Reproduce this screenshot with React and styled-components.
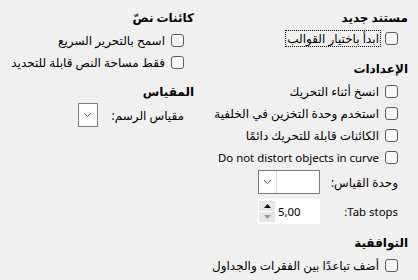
import React from 'react';
import styled, { createGlobalStyle } from 'styled-components';

const GlobalStyle = createGlobalStyle`
  html, body {
    margin: 0;
    padding: 0;
    background: #f0f0f0;
  }
  body {
    font-family: "Noto Sans", "DejaVu Sans", sans-serif;
    font-size: 12px;
    color: #000;
  }
`;

const Page = styled.div`
  direction: rtl;
  width: 418px;
  height: 280px;
  box-sizing: border-box;
  padding: 9px 10px 0 0;
  display: flex;
  gap: 20px;
  overflow: hidden;
`;

const Column = styled.div`
  width: ${(p) => p.width}px;
  flex-shrink: 0;
  display: flex;
  flex-direction: column;
`;

const Section = styled.section`
  display: flex;
  flex-direction: column;
  margin-top: ${(p) => p.gap || 0}px;
`;

const Heading = styled.h3`
  margin: 0;
  height: 18px;
  line-height: 18px;
  font-size: 12px;
  font-weight: 700;
`;

const Rows = styled.div`
  display: flex;
  flex-direction: column;
  padding-right: 10px;
  margin-top: ${(p) => p.top || 0}px;
`;

const CheckRow = styled.label`
  display: flex;
  align-items: center;
  gap: 4px;
  height: 22px;
  white-space: nowrap;
`;

const Box = styled.span`
  width: 13px;
  height: 13px;
  box-sizing: border-box;
  border: 1px solid #5c5c5c;
  border-radius: 3px;
  background: #f8f8f8;
  flex-shrink: 0;
`;

const Caption = styled.span`
  padding: 0 1px;
  line-height: 15px;
  font-size: ${(p) => (p.latin ? '11.4px' : 'inherit')};
  border: 1px dotted ${(p) => (p.focused ? '#000' : 'transparent')};
`;

const FieldRow = styled.div`
  display: flex;
  align-items: center;
  height: ${(p) => p.h || 28}px;
`;

const FieldLabel = styled.span`
  width: ${(p) => p.w}px;
  flex-shrink: 0;
  white-space: nowrap;
  font-size: ${(p) => (p.latin ? '11.4px' : 'inherit')};
`;

const Combo = styled.div`
  direction: ltr;
  width: ${(p) => p.w}px;
  height: 24px;
  box-sizing: border-box;
  background: #fff;
  border: 1px solid #7a7a7a;
  display: flex;
  align-items: stretch;
`;

const DropButton = styled.span`
  width: 17px;
  border-right: 1px solid ${(p) => (p.bare ? 'transparent' : '#d6d6d6')};
  display: flex;
  align-items: center;
  justify-content: center;
`;

const Spin = styled.div`
  direction: ltr;
  width: 62px;
  height: 25px;
  box-sizing: border-box;
  background: #fff;
  display: flex;
  align-items: center;
  gap: 3px;
  padding-left: 1px;
  font-size: 11.4px;
`;

const SpinButtons = styled.div`
  display: flex;
  flex-direction: column;
  gap: 1px;
  width: 16px;
`;

const SpinBtn = styled.span`
  height: 10px;
  background: #e6e6e6;
  display: flex;
  align-items: center;
  justify-content: center;
`;

const Chevron = () => (
  <svg width="9" height="6" viewBox="0 0 9 6">
    <path d="M1 1.2 L4.5 4.5 L8 1.2" fill="none" stroke="#555" strokeWidth="1" />
  </svg>
);

const Triangle = ({ down, color }) => (
  <svg width="7" height="4" viewBox="0 0 7 4">
    <path d={down ? 'M0 0 H7 L3.5 4 Z' : 'M0 4 H7 L3.5 0 Z'} fill={color} />
  </svg>
);

function Check({ children, focused, latin }) {
  return (
    <CheckRow>
      <Box />
      <Caption focused={focused} latin={latin}>
        {children}
      </Caption>
    </CheckRow>
  );
}

export default function App() {
  return (
    <>
      <GlobalStyle />
      <Page>
        <Column width={194}>
          <Section>
            <Heading>مستند جديد</Heading>
            <Rows>
              <Check focused>ابدأ باختيار القوالب</Check>
            </Rows>
          </Section>

          <Section gap={11}>
            <Heading>الإعدادات</Heading>
            <Rows top={2}>
              <Check>انسخ أثناء التحريك</Check>
              <Check>استخدم وحدة التخزين في الخلفية</Check>
              <Check>الكائنات قابلة للتحريك دائمًا</Check>
              <Check latin>Do not distort objects in curve</Check>
              <FieldRow>
                <FieldLabel w={78}>وحدة القياس:</FieldLabel>
                <Combo w={62}>
                  <DropButton>
                    <Chevron />
                  </DropButton>
                </Combo>
              </FieldRow>
              <FieldRow h={30}>
                <FieldLabel w={78} latin>
                  Tab stops:
                </FieldLabel>
                <Spin>
                  <SpinButtons>
                    <SpinBtn>
                      <Triangle color="#111" />
                    </SpinBtn>
                    <SpinBtn>
                      <Triangle down color="#9a9a9a" />
                    </SpinBtn>
                  </SpinButtons>
                  <span>5,00</span>
                </Spin>
              </FieldRow>
            </Rows>
          </Section>

          <Section gap={8}>
            <Heading>التوافقية</Heading>
            <Rows top={2}>
              <Check>أضف تباعدًا بين الفقرات والجداول</Check>
            </Rows>
          </Section>
        </Column>

        <Column width={194}>
          <Section>
            <Heading>كائنات نصّ</Heading>
            <Rows top={2}>
              <Check>اسمح بالتحرير السريع</Check>
              <Check>فقط مساحة النص قابلة للتحديد</Check>
            </Rows>
          </Section>

          <Section gap={10}>
            <Heading>المقياس</Heading>
            <Rows top={1}>
              <FieldRow h={26}>
                <FieldLabel w={86}>مقياس الرسم:</FieldLabel>
                <Combo w={20}>
                  <DropButton bare>
                    <Chevron />
                  </DropButton>
                </Combo>
              </FieldRow>
            </Rows>
          </Section>
        </Column>
      </Page>
    </>
  );
}
